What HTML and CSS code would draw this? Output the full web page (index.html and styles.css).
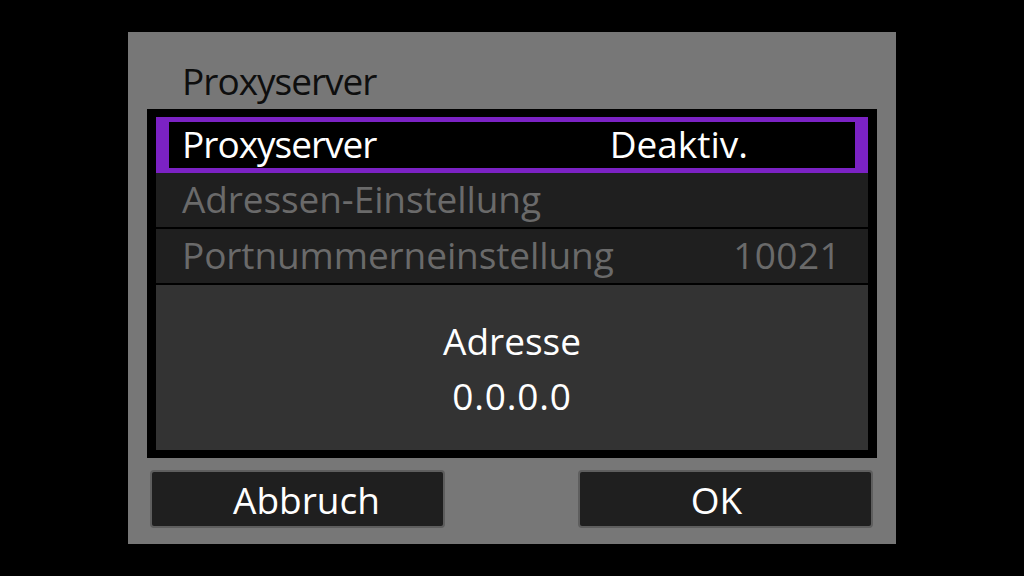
FILE: index.html
```html
<!DOCTYPE html>
<html lang="de">
<head>
    <meta charset="UTF-8">
    <meta name="viewport" content="width=device-width, initial-scale=1.0">
    <title>Proxyserver</title>
    <link rel="stylesheet" href="styles.css">
</head>
<body>
    <section class="dialog">
        <header class="title tight">Proxyserver</header>

        <section class="box">
            <div class="row selected">
                <span class="label tight">Proxyserver</span>
                <span class="value value-first">Deaktiv.</span>
            </div>
            <div class="row disabled">
                <span class="label">Adressen-Einstellung</span>
            </div>
            <div class="row disabled">
                <span class="label">Portnummerneinstellung</span>
                <span class="value port">10021</span>
            </div>
            <div class="info">
                <span>Adresse</span>
                <span class="num">0.0.0.0</span>
            </div>
        </section>

        <section class="buttons">
            <button class="button cancel">Abbruch</button>
            <button class="button ok">OK</button>
        </section>
    </section>
</body>
</html>
```

FILE: styles.css
```css
*{margin: 0;padding: 0;box-sizing: border-box;}
body{
    width: 100%;
    height: 100vh;
    display: flex;
    justify-content: center;
    align-items: center;
    background: #000;
    font-family: "Open Sans", "Noto Sans", sans-serif;
    font-size: 37px;}

.dialog{
    width: 768px; height: 512px;
    background-color: #777777;
    display: flex; flex-direction: column;
    padding: 0 19px 16px 19px;}

.title{
    height: 77px; padding: 27px 0 0 35px;
    color: #0e0e0e; line-height: 44px;}

.tight{ letter-spacing: -1px; }
.num{ letter-spacing: 0.8px; }

.box{
    background-color: #000;
    padding: 8px 9px;
    display: flex; flex-direction: column; gap: 2px;}

.row{
    height: 54px; display: flex; align-items: center;
    padding: 0 30px 4px 26px;
    background-color: #1f1f1f; color: #fff;
    line-height: 1; letter-spacing: -0.1px;}
.row.selected{
    height: 56px; margin-bottom: -2px;
    background-color: #000;
    border: 5px solid #7b22c4; border-width: 5px 13px;
    padding: 0 0 4px 13px;}
.row.disabled{ color: #6a6a6a; }

.value{ margin-left: auto; }
.value-first{ margin-right: 107px; letter-spacing: 0; }
.port{ letter-spacing: 0.4px; margin-right: -3px; }

.info{
    height: 165px; background-color: #333333; color: #fff;
    display: flex; flex-direction: column;
    justify-content: center; align-items: center;
    line-height: 55px;}

.buttons{
    margin-top: 12px; display: flex;
    justify-content: space-between; padding: 0 4px 0 3px;}

.button{
    width: 295px; height: 58px;
    font-family: inherit; font-size: 37px;
    background-color: #1f1f1f; color: #fff;
    border: 2px solid #5e5e5e; border-radius: 4px;}
.cancel{ padding-left: 18px; }
.ok{ padding-right: 18px; }
```
